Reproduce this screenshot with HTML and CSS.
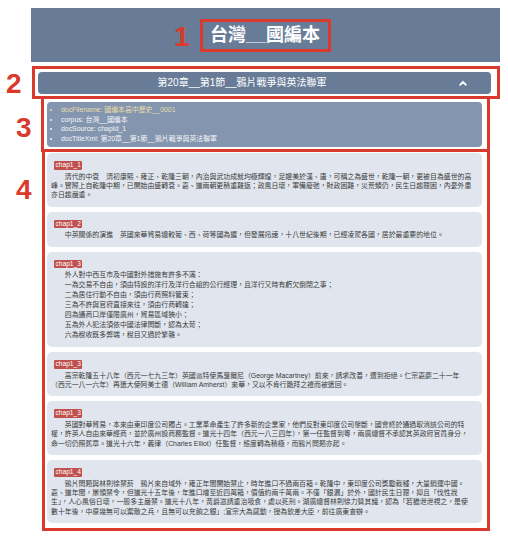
FILE: index.html
```html
<!DOCTYPE html>
<html lang="zh-Hant">
<head>
<meta charset="utf-8">
<title>台灣__國編本</title>
<link rel="stylesheet" href="styles.css">
</head>
<body>
<div class="page">
  <header class="site-header">
    <h1 class="title">台灣__國編本</h1>
  </header>

  <section class="zone zone-bar">
    <div class="section-bar">
      <span class="section-title">第20章__第1節__鴉片戰爭與英法聯軍</span>
      <span class="chevron"><svg width="8" height="6" viewBox="0 0 8 6"><polyline points="1.2,4.8 4,1.8 6.8,4.8" fill="none" stroke="#ffffff" stroke-width="1.8" stroke-linecap="round" stroke-linejoin="round"/></svg></span>
    </div>
  </section>

  <section class="zone zone-meta">
    <ul class="meta">
      <li class="meta-hl">docFilename: 國編本高中歷史__0001</li>
      <li>corpus: 台灣__國編本</li>
      <li>docSource: chapId_1</li>
      <li>docTitleXml: 第20章__第1節__鴉片戰爭與英法聯軍</li>
    </ul>
  </section>

  <section class="zone zone-cards">
    <article class="card">
      <span class="tag">chap1_1</span>
      <p class="text">清代的中衰　清初康熙、雍正、乾隆三朝，內治與武功成就均極輝煌，足媲美於漢、唐，可稱之為盛世，乾隆一朝，更被目為盛世的高峰。實際上自乾隆中期，已開始由盛轉衰。嘉、道兩朝更積重難返；政風日壞，軍備廢弛，財政困難，災荒頻仍，民生日趨艱困，內憂外患亦日趨嚴重。</p>
    </article>
    <article class="card">
      <span class="tag">chap1_2</span>
      <p class="text">中英關係的演進　英國來華貿易總較葡、西、荷等國為遲，但發展迅速，十八世紀後期，已經凌駕各國，居於最重要的地位。</p>
    </article>
    <article class="card">
      <span class="tag">chap1_3</span>
      <div class="lines">
        <p>外人對中西互市及中國對外措施有許多不滿：</p>
        <p>一為交易不自由，須由特設的洋行及洋行合組的公行經理，且洋行又時有虧欠倒閉之事；</p>
        <p>二為居住行動不自由，須由行商照料管束；</p>
        <p>三為不許與官府直接來往，須由行商轉達；</p>
        <p>四為通商口岸僅限廣州，貿易區域狹小；</p>
        <p>五為外人犯法須依中國法律問斷，認為太苛；</p>
        <p>六為稅收既多弊端，稅目又過於繁雜。</p>
      </div>
    </article>
    <article class="card">
      <span class="tag">chap1_3</span>
      <p class="text">高宗乾隆五十八年（西元一七九三年）英國派特使馬戛爾尼（George Macartney）前來，請求改善，遭到拒絕。仁宗嘉慶二十一年（西元一八一六年）再遣大使阿美士德（William Amherst）來華，又以不肯行跪拜之禮而被遣回。</p>
    </article>
    <article class="card">
      <span class="tag">chap1_3</span>
      <p class="text">英國對華貿易，本來由東印度公司獨占。工業革命產生了許多新的企業家，他們反對東印度公司壟斷，國會終於通過取消該公司的特權，許英人自由來華經商，並於廣州設商務監督。道光十四年（西元一八三四年），第一任監督到粵，兩廣總督不承認其英政府官員身分，命一切仍照舊章。道光十六年，義律（Charles Elliot）任監督，態度轉為積極，而鴉片問題亦起。</p>
    </article>
    <article class="card">
      <span class="tag">chap1_4</span>
      <p class="text">鴉片問題與林則徐禁菸　鴉片來自域外，雍正年間開始禁止，時年進口不過兩百箱。乾隆中，東印度公司獎勵栽種，大量銷運中國。嘉、道年間，屢頒禁令，但道光十五年後，年進口增至近四萬箱，價值約兩千萬兩。不僅「銀漏」於外，國計民生日艱，抑且「伐性戕生」，人心風俗日壞，一般多主嚴禁。道光十八年，黃爵滋請重治吸食，處以死刑。湖廣總督林則徐力贊其議，認為「若猶泄泄視之，是使數十年後，中原幾無可以禦敵之兵，且無可以充餉之銀」;宣宗大為感動，授為欽差大臣，前往廣東查辦。</p>
    </article>
  </section>
</div>

<span class="marker marker-1">1</span>
<span class="marker marker-2">2</span>
<span class="marker marker-3">3</span>
<span class="marker marker-4">4</span>
</body>
</html>
```

FILE: styles.css
```css
* { box-sizing: border-box; }

html, body {
  margin: 0;
  padding: 0;
  background: #ffffff;
}

body {
  position: relative;
  width: 508px;
  min-height: 541px;
  font-family: "Liberation Sans", "Noto Sans CJK TC", sans-serif;
  color: #3a3a3a;
}

.page {
  margin: 8px 0 0 31px;
  width: 469px;
}

/* Header */
.site-header {
  background: #687c98;
  height: 54px;
  padding-top: 11px;
  text-align: center;
}

.title {
  display: inline-block;
  margin: 0;
  padding: 0 8px 0 7px;
  height: 33px;
  line-height: 27px;
  font-size: 18px;
  font-weight: bold;
  color: #ffffff;
  border: 3px solid #d93a2b;
}

/* Annotated zones */
.zone {
  border: 3px solid #d93a2b;
}

.zone-bar {
  margin: 4px 0 0 1px;
  width: 468px;
  padding: 3px 6px 2px 3px;
}

.zone-meta {
  margin-left: 10px;
  width: 449px;
  border-top: none;
  padding: 3px 5px 2px 3px;
}

.zone-cards {
  margin-left: 11px;
  width: 448px;
  border-top: none;
  padding: 1px 5px 5px 2px;
  display: flex;
  flex-direction: column;
  gap: 5px;
}

/* Section bar */
.section-bar {
  display: flex;
  align-items: center;
  height: 22px;
  background: #687c98;
  border-radius: 4px;
  color: #ffffff;
}

.section-title {
  flex: 1;
  text-align: center;
  font-size: 10px;
  line-height: 22px;
}

.chevron {
  width: 45px;
  padding-left: 13px;
  display: flex;
  align-items: center;
}

.chevron svg { display: block; }

/* Metadata */
.meta {
  margin: 0;
  height: 45px;
  padding: 3px 0 0 14px;
  background: #8395af;
  border-radius: 4px;
  color: #f4f5f7;
  font-size: 6.9px;
  line-height: 9.7px;
  list-style: disc;
}

.meta-hl { color: #eadfa8; }

/* Cards */
.card {
  background: #e1e6ee;
  border-radius: 5px;
  padding: 8px 9.5px 7px 4px;
  font-size: 6.9px;
}

.tag {
  display: block;
  width: max-content;
  margin-left: 3px;
  padding: 0 1.5px;
  height: 8.5px;
  line-height: 8.5px;
  font-size: 6.6px;
  color: #ffffff;
  background: #c0504d;
  border-radius: 1px;
}

.text,
.lines p {
  margin: 0;
  font-size: 6.9px;
  text-indent: 2em;
}

.text {
  margin-top: 2px;
  line-height: 9.4px;
}

.lines {
  margin-top: 2px;
}

.lines p {
  line-height: 10px;
}

/* Annotation numbers overlaid on the screenshot */
.marker {
  position: absolute;
  font-family: "Liberation Sans", sans-serif;
  font-weight: bold;
  font-size: 28px;
  line-height: 28px;
  color: #d93a2b;
}

.marker-1 { left: 174px; top: 23px; }
.marker-2 { left: 6px; top: 70px; }
.marker-3 { left: 16px; top: 114px; }
.marker-4 { left: 16px; top: 176px; }
```
